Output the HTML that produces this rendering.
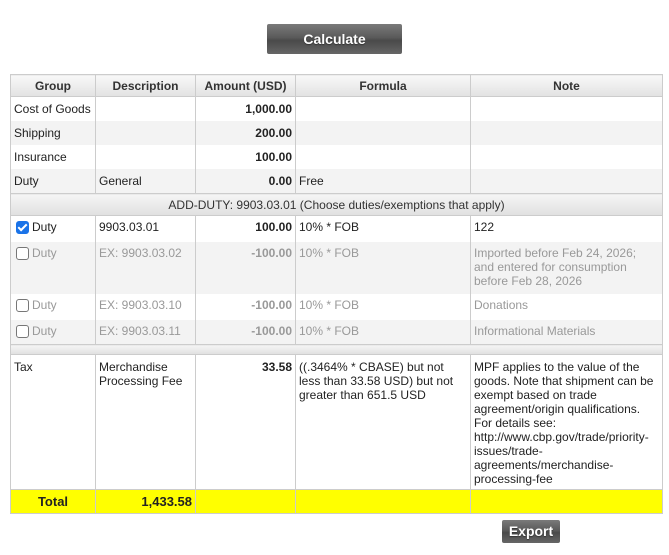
<!DOCTYPE html>
<html><head><style>
body{margin:0;background:#fff;font-family:"Liberation Sans",Arial,sans-serif;font-size:12px;color:#222;width:669px;height:555px;overflow:hidden;position:relative}
.btn{position:absolute;background:linear-gradient(#7a7a7a,#5a5a5a 45%,#4a4a4a 55%,#666);color:#fff;font-weight:bold;text-align:center;border-radius:2px;text-shadow:0 1px 1px #333}
table{position:absolute;left:10px;top:74px;width:652px;border-collapse:collapse;table-layout:fixed}
td,th{border-left:1px solid #ccc;border-right:1px solid #ccc;padding:0 3px;vertical-align:top;line-height:14px;overflow:hidden;white-space:nowrap}
td.w{white-space:normal}
th{background:linear-gradient(#f8f8f8,#e2e2e2);font-weight:bold;height:21px;vertical-align:middle;text-align:center;color:#333;border:1px solid #ccc}
tr.r td{height:24px;vertical-align:middle}
tr.g td{background:#f3f3f3}
.n{text-align:right;font-weight:bold}
.x td{color:#999}
.sec td{background:linear-gradient(#f5f5f5,#e0e0e0);text-align:center;height:21px;vertical-align:middle;color:#333;border:1px solid #ccc}
.cb{display:inline-block;width:13px;height:13px;border:1px solid #777;border-radius:3px;vertical-align:-3px;margin-right:3px;margin-left:2px;background:#fff;box-sizing:border-box}
.cb.on{background:#1a73e8;border-color:#1a73e8;position:relative}
.cb.on:after{content:"";position:absolute;left:3px;top:0px;width:3px;height:7px;border:solid #fff;border-width:0 2px 2px 0;transform:rotate(45deg)}
.tot td{background:#ff0;height:23px;font-weight:bold;font-size:13px;vertical-align:middle;border:1px solid #ccc}
.last td{border-bottom:1px solid #ccc}
.p td{padding-top:4px}
</style></head><body>
<div class="btn" style="left:267px;top:24px;width:135px;height:30px;line-height:30px;font-size:14px">Calculate</div>
<table>
<colgroup><col style="width:85px"><col style="width:100px"><col style="width:100px"><col style="width:175px"><col style="width:192px"></colgroup>
<tr><th>Group</th><th>Description</th><th>Amount (USD)</th><th>Formula</th><th>Note</th></tr>
<tr class="r"><td>Cost of Goods</td><td></td><td class="n">1,000.00</td><td></td><td></td></tr>
<tr class="r g"><td>Shipping</td><td></td><td class="n">200.00</td><td></td><td></td></tr>
<tr class="r"><td>Insurance</td><td></td><td class="n">100.00</td><td></td><td></td></tr>
<tr class="r g"><td>Duty</td><td>General</td><td class="n">0.00</td><td>Free</td><td></td></tr>
<tr class="sec"><td colspan="5">ADD-DUTY: 9903.03.01 (Choose duties/exemptions that apply)</td></tr>
<tr class="p"><td style="height:22px"><span class="cb on"></span>Duty</td><td>9903.03.01</td><td class="n">100.00</td><td>10% * FOB</td><td>122</td></tr>
<tr class="x g p"><td style="height:48px"><span class="cb"></span>Duty</td><td>EX: 9903.03.02</td><td class="n">-100.00</td><td>10% * FOB</td><td class="w">Imported before Feb 24, 2026; and entered for consumption before Feb 28, 2026</td></tr>
<tr class="x p"><td style="height:22px"><span class="cb"></span>Duty</td><td>EX: 9903.03.10</td><td class="n">-100.00</td><td>10% * FOB</td><td>Donations</td></tr>
<tr class="x g p last"><td style="height:20px"><span class="cb"></span>Duty</td><td>EX: 9903.03.11</td><td class="n">-100.00</td><td>10% * FOB</td><td>Informational Materials</td></tr>
<tr class="sec"><td colspan="5" style="height:9px"></td></tr>
<tr><td style="height:129px;padding-top:5px">Tax</td><td class="w" style="padding-top:5px">Merchandise Processing Fee</td><td class="n" style="padding-top:5px">33.58</td><td class="w" style="padding-top:5px">((.3464% * CBASE) but not less than 33.58 USD) but not greater than 651.5 USD</td><td class="w" style="padding-top:5px">MPF applies to the value of the goods. Note that shipment can be exempt based on trade agreement/origin qualifications. For details see: http://www.cbp.gov/trade/priority-issues/trade-agreements/merchandise-processing-fee</td></tr>
<tr class="tot"><td style="text-align:center">Total</td><td style="text-align:right">1,433.58</td><td></td><td></td><td></td></tr>
</table>
<div class="btn" style="left:502px;top:520px;width:58px;height:23px;line-height:23px;font-size:14px">Export</div>
</body></html>
